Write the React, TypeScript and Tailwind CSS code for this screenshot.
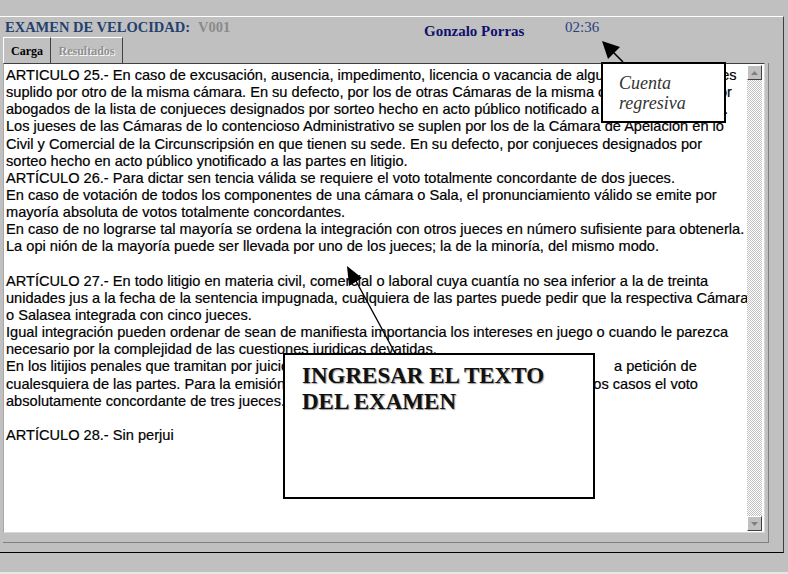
import React from 'react';

const lines: React.ReactNode[] = [
  'ARTICULO 25.- En caso de excusación, ausencia, impedimento, licencia o vacancia de alguno de sus jueces, es',
  'suplido por otro de la misma cámara. En su defecto, por los de otras Cámaras de la misma circunscripción o por',
  'abogados de la lista de conjueces designados por sorteo hecho en acto público notificado a las partes en litigio.',
  'Los jueses de las Cámaras de lo contencioso Administrativo se suplen por los de la Cámara de Apelación en lo',
  'Civil y Comercial de la Circunscripsión en que tienen su sede. En su defecto, por conjueces designados por',
  'sorteo hecho en acto público ynotificado a las partes en litigio.',
  'ARTÍCULO 26.- Para dictar sen tencia válida se requiere el voto totalmente concordante de dos jueces.',
  'En caso de votación de todos los componentes de una cámara o Sala, el pronunciamiento válido se emite por',
  'mayoría absoluta de votos totalmente concordantes.',
  'En caso de no lograrse tal mayoría se ordena la integración con otros jueces en número sufisiente para obtenerla.',
  'La opi nión de la mayoría puede ser llevada por uno de los jueces; la de la minoría, del mismo modo.',
  '',
  'ARTÍCULO 27.- En todo litigio en materia civil, comercial o laboral cuya cuantía no sea inferior a la de treinta',
  'unidades jus a la fecha de la sentencia impugnada, cualquiera de las partes puede pedir que la respectiva Cámara',
  'o Salasea integrada con cinco jueces.',
  'Igual integración pueden ordenar de sean de manifiesta importancia los intereses en juego o cuando le parezca',
  'necesario por la complejidad de las cuestiones juridicas devatidas.',
  <>
    <span className="inline-block w-[608px] overflow-hidden align-top">
      En los litijios penales que tramitan por juicio oral, la integración con cinco jueces
    </span>
    {'a petición de'}
  </>,
  'cualesquiera de las partes. Para la emisión de la sentencia definitiva se requiere en todos los casos el voto',
  'absolutamente concordante de tres jueces.',
  '',
  'ARTÍCULO 28.- Sin perjui',
];

const ScrollButton: React.FC<{ down?: boolean }> = ({ down }) => (
  <div className="h-[15px] w-[15px] shrink-0 bg-[#c0c0c0] border border-t-white border-l-white border-r-[#404040] border-b-[#404040] flex items-center justify-center">
    <svg width="7" height="4" viewBox="0 0 7 4">
      {down ? <path d="M0 0 H7 L3.5 4 Z" fill="#808080" /> : <path d="M0 4 H7 L3.5 0 Z" fill="#808080" />}
    </svg>
  </div>
);

export default function App() {
  return (
    <div className="relative w-[788px] h-[574px] bg-[#c0c0c0] overflow-hidden font-['Liberation_Serif',serif]">
      <div className="h-4" />

      {/* outer window panel */}
      <div className="w-[784px] h-[537px] border-t border-t-white border-r border-r-[#404040] border-b border-b-black flex flex-col">
        {/* header */}
        <div className="h-5 flex items-start leading-[20px] shrink-0">
          <div className="w-[424px] pl-[5px] text-[14.5px] font-bold whitespace-nowrap">
            <span className="text-[#23406f]">EXAMEN DE VELOCIDAD:</span>
            <span className="ml-2 text-[#8a8a8a]">V001</span>
          </div>
          <div className="w-[141px] mt-1 text-[15px] font-bold text-[#10106e] whitespace-nowrap">Gonzalo Porras</div>
          <div className="text-[15px] text-[#2a3f7a]">02:36</div>
        </div>

        {/* tabs */}
        <div className="h-[26px] flex pl-[3px] shrink-0">
          <div className="w-[48px] border-t border-l border-white border-r border-r-[#404040] flex items-center justify-center text-[12px] font-bold text-black">
            Carga
          </div>
          <div className="w-[72px] border-t border-t-white border-r border-r-[#404040] flex items-center justify-center text-[12px] font-bold text-[#909090] [text-shadow:1px_1px_0_#ffffff]">
            Resultados
          </div>
        </div>

        {/* tab panel */}
        <div className="ml-[3px] w-[766px] h-[480px] border-r border-b border-[#808080] pr-[3px] pb-[9px]">
          <div className="h-full bg-white border-t border-t-[#404040] border-l border-l-[#a8a8a8] border-b border-b-[#d8d8d8] border-r border-r-[#d8d8d8] flex">
            <div className="flex-1 pl-[2px] pt-[3px] font-['Liberation_Sans',Arial,sans-serif] text-[14.6px] leading-[17.15px] text-black [-webkit-text-stroke:0.2px_#000] overflow-hidden">
              {lines.map((l, i) => (
                <div key={i} className="whitespace-pre h-[17.15px]">{l === '' ? '\u00a0' : l}</div>
              ))}
            </div>
            <div className="w-[15px] mt-[1px] mb-[1px] mr-[2px] flex flex-col">
              <ScrollButton />
              <div className="flex-1 bg-[repeating-conic-gradient(#c0c0c0_0_25%,#ffffff_0_50%)] bg-[length:2px_2px]" />
              <ScrollButton down />
            </div>
          </div>
        </div>
      </div>

      <div className="absolute left-0 bottom-0 w-full h-[2px] bg-[#e6e6e6]" />

      {/* callout: countdown */}
      <div className="absolute left-[601px] top-[62px] w-[125px] h-[61px] bg-white border-2 border-black pl-[16px] pt-[9px] italic text-[18px] leading-[20px] text-[#333333]">
        <div>Cuenta</div>
        <div>regresiva</div>
      </div>

      {/* callout: exam text */}
      <div className="absolute left-[283px] top-[353px] w-[312px] h-[146px] bg-white border-2 border-black pl-[17px] pt-[8px] font-bold text-[23px] leading-[26px] text-[#111111] [text-shadow:1px_1px_1px_#9a9a9a]">
        <div>INGRESAR EL TEXTO</div>
        <div>DEL EXAMEN</div>
      </div>

      {/* pointer arrows */}
      <svg className="absolute inset-0 pointer-events-none" width="788" height="574">
        <line x1="623" y1="62" x2="612" y2="51" stroke="black" strokeWidth="1.6" />
        <path d="M602 41 L620 47 L608 59 Z" fill="black" />
        <line x1="395" y1="353" x2="356" y2="281" stroke="black" strokeWidth="1.4" />
        <path d="M347 266 L362 278 L349 286 Z" fill="black" />
      </svg>
    </div>
  );
}
